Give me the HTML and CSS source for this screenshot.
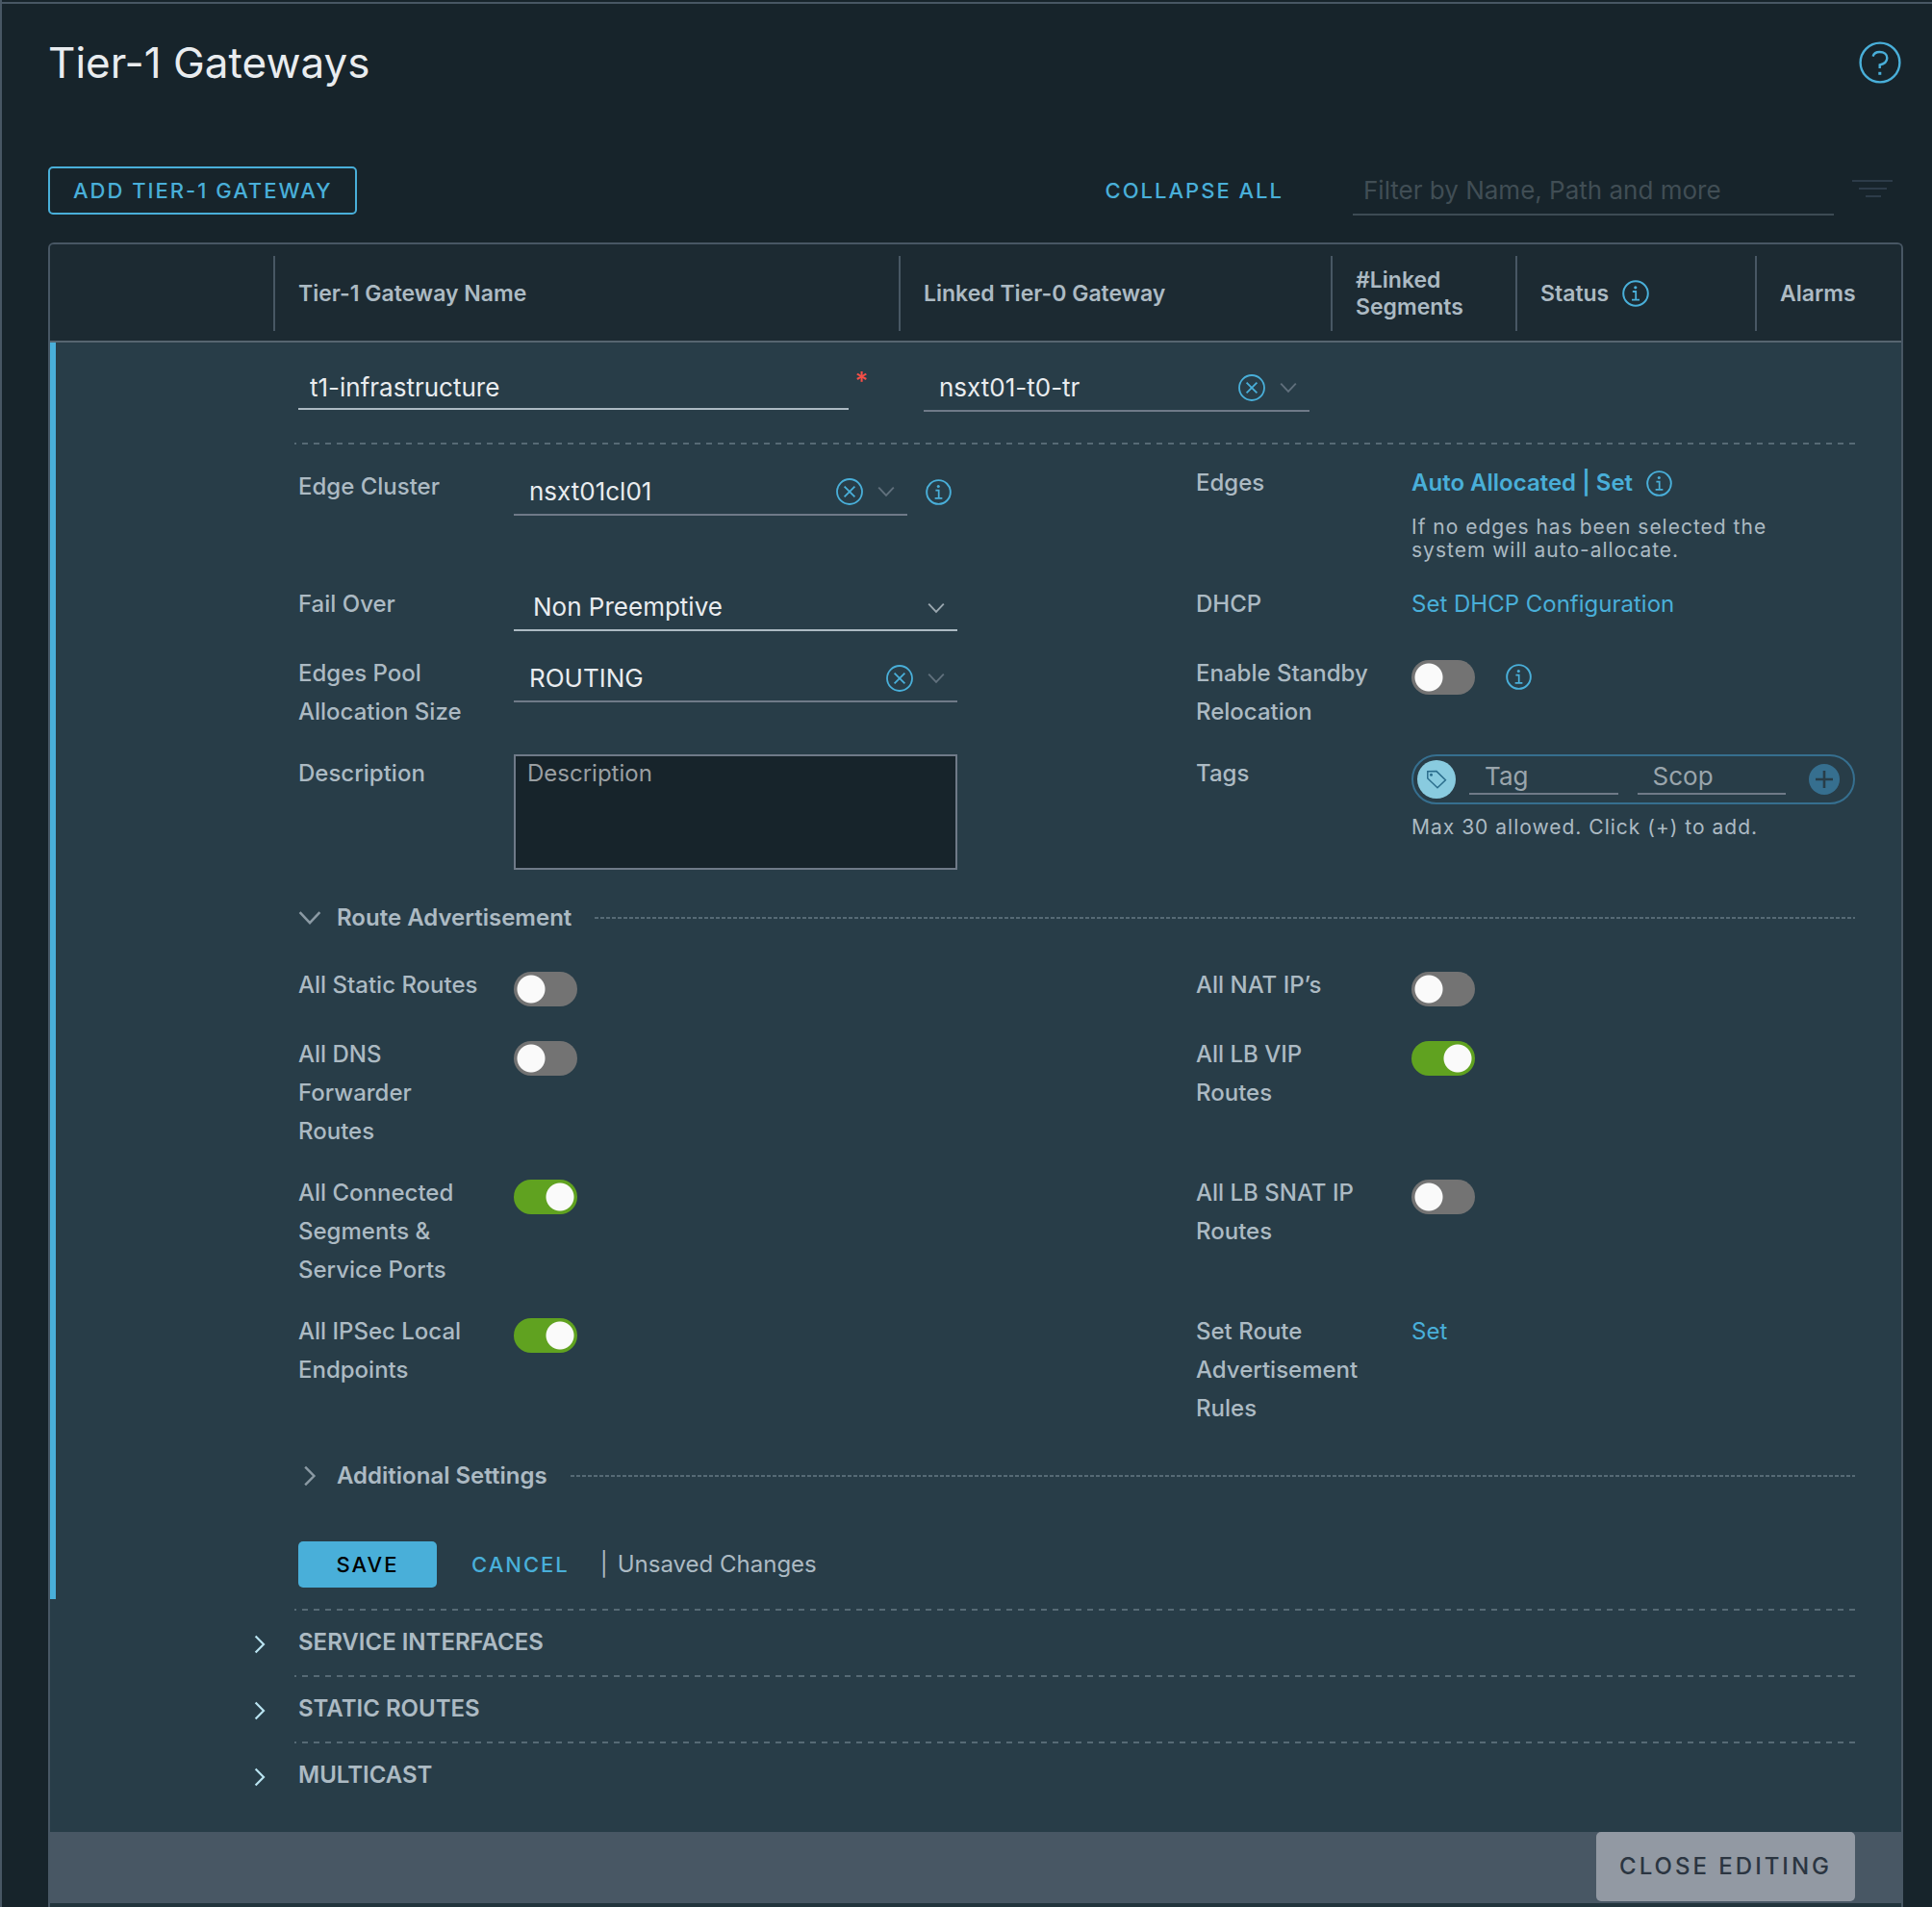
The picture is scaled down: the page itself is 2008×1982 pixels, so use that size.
FILE: index.html
```html
<!DOCTYPE html>
<html lang="en">
<head>
<meta charset="utf-8">
<title>Tier-1 Gateways</title>
<link rel="stylesheet" href="styles.css">
</head>
<body>
<svg class="sprite" aria-hidden="true">
  <symbol id="i-info" viewBox="0 0 28 28">
    <circle cx="14" cy="14" r="12.8" fill="none" stroke="currentColor" stroke-width="2"/>
    <circle cx="13.8" cy="7.8" r="1.6" fill="currentColor"/>
    <path d="M10.8 12h3.4v8.4M10 20.6h8" fill="none" stroke="currentColor" stroke-width="1.8"/>
  </symbol>
  <symbol id="i-clear" viewBox="0 0 28 28">
    <circle cx="14" cy="14" r="13" fill="none" stroke="currentColor" stroke-width="1.8"/>
    <path d="M8.6 8.6l10.8 10.8M19.4 8.6L8.6 19.4" fill="none" stroke="currentColor" stroke-width="1.8"/>
  </symbol>
  <symbol id="i-down" viewBox="0 0 18 12">
    <path d="M1.2 1.6L9 9.8l7.8-8.2" fill="none" stroke="currentColor" stroke-width="1.9"/>
  </symbol>
  <symbol id="i-right" viewBox="0 0 12 20">
    <path d="M1.6 1.4L10 10l-8.4 8.6" fill="none" stroke="currentColor" stroke-width="2.2"/>
  </symbol>
</svg>
<main class="page">
  <header class="page-header">
    <h1>Tier-1 Gateways</h1>
    <button class="icon-button" type="button" aria-label="Help">
      <svg class="help-icon" viewBox="0 0 44 44" fill="none" stroke="currentColor">
        <circle cx="22" cy="22" r="20.4" stroke-width="2.4"/>
        <path d="M14.6 15.6c1-3.200 3.600-4.600 6.900-4.600 4.800 0 7.800 2.400 7.800 6.300 0 4.400-4 6.400-7.600 7.200v3.400" stroke-width="2.400"/>
        <path d="M20.300 31.800h3v3h-3z" fill="currentColor" stroke="none"/>
      </svg>
    </button>
  </header>

  <div class="toolbar">
    <button class="btn btn-outline" type="button">ADD TIER-1 GATEWAY</button>
    <button class="btn btn-link collapse" type="button">COLLAPSE ALL</button>
    <input class="filter" type="text" aria-label="Filter" placeholder="Filter by Name, Path and more">
    <button class="icon-button filter-button" type="button" aria-label="Filter options">
      <svg class="filter-icon" viewBox="0 0 42 20" fill="none" stroke="currentColor" stroke-width="2"><path d="M0 2h42M7 10h29M14 18h16"/></svg>
    </button>
  </div>

  <section class="card">
    <table class="grid">
      <colgroup><col class="c-rail"><col><col class="c-linked"><col class="c-segments"><col class="c-status"><col class="c-alarms"></colgroup>
      <thead>
        <tr>
          <td></td>
          <th scope="col"><div>Tier-1 Gateway Name</div></th>
          <th scope="col"><div>Linked Tier-0 Gateway</div></th>
          <th scope="col"><div>#Linked<br>Segments</div></th>
          <th scope="col"><div>Status <svg class="info"><use href="#i-info"/></svg></div></th>
          <th scope="col"><div>Alarms</div></th>
        </tr>
      </thead>
      <tbody>
        <tr>
          <td class="rail" rowspan="2"></td>
          <td class="name-cell">
            <div class="name-field">
              <input class="text-input" type="text" aria-label="Tier-1 Gateway Name" value="t1-infrastructure" required>
              <span class="required">*</span>
            </div>
          </td>
          <td class="linked-cell">
            <div class="combo">
              <input type="text" aria-label="Linked Tier-0 Gateway" value="nsxt01-t0-tr">
              <button class="icon-button clear" type="button" aria-label="Clear"><svg><use href="#i-clear"/></svg></button>
              <button class="icon-button caret" type="button" aria-label="Open"><svg><use href="#i-down"/></svg></button>
            </div>
          </td>
          <td colspan="3"></td>
        </tr>
        <tr>
          <td class="form-cell" colspan="5">
            <div class="dashed"></div>
            <div class="form">
              <div class="fields">
                <div class="field lowered">
                  <label for="edge-cluster">Edge Cluster</label>
                  <div class="inline">
                    <div class="combo">
                      <input id="edge-cluster" type="text" value="nsxt01cl01">
                      <button class="icon-button clear" type="button" aria-label="Clear"><svg><use href="#i-clear"/></svg></button>
                      <button class="icon-button caret" type="button" aria-label="Open"><svg><use href="#i-down"/></svg></button>
                    </div>
                    <svg class="info cluster-info"><use href="#i-info"/></svg>
                  </div>
                </div>
                <div class="field">
                  <span class="label">Edges</span>
                  <div>
                    <div class="edges-line"><a class="strong" href="#edges">Auto Allocated | Set</a><svg class="info"><use href="#i-info"/></svg></div>
                    <p class="note edges-note">If no edges has been selected the system will auto-allocate.</p>
                  </div>
                </div>

                <div class="field">
                  <label for="fail-over">Fail Over</label>
                  <div class="select">
                    <select id="fail-over"><option>Non Preemptive</option><option>Preemptive</option></select>
                    <svg><use href="#i-down"/></svg>
                  </div>
                </div>
                <div class="field">
                  <span class="label">DHCP</span>
                  <div><a href="#dhcp">Set DHCP Configuration</a></div>
                </div>

                <div class="field">
                  <label for="pool">Edges Pool<br>Allocation Size</label>
                  <div class="combo">
                    <input id="pool" type="text" value="ROUTING">
                    <button class="icon-button clear" type="button" aria-label="Clear"><svg><use href="#i-clear"/></svg></button>
                    <button class="icon-button caret" type="button" aria-label="Open"><svg><use href="#i-down"/></svg></button>
                  </div>
                </div>
                <div class="field">
                  <label for="standby">Enable Standby<br>Relocation</label>
                  <div class="standby"><input class="toggle" id="standby" type="checkbox"><svg class="info"><use href="#i-info"/></svg></div>
                </div>

                <div class="field">
                  <label for="description">Description</label>
                  <textarea id="description" placeholder="Description"></textarea>
                </div>
                <div class="field">
                  <label for="tag">Tags</label>
                  <div>
                    <div class="tags">
                      <span class="tag-badge"><svg viewBox="0 0 22 22" fill="none" stroke="currentColor" stroke-width="1.500"><path d="M1.800 2.800v7.200l10.200 9.700 8.400-8L11 2.600z"/><circle cx="5.500" cy="6.200" r=".8"/></svg></span>
                      <input id="tag" type="text" placeholder="Tag">
                      <input type="text" aria-label="Scope" placeholder="Scop">
                      <button class="icon-button add-tag" type="button" aria-label="Add tag"><svg viewBox="0 0 32 32"><circle cx="16" cy="16" r="16" fill="#366f8f"/><path d="M7 16h18M16 7v18" stroke="#283d48" stroke-width="2.600"/></svg></button>
                    </div>
                    <p class="note tags-note">Max 30 allowed. Click (+) to add.</p>
                  </div>
                </div>
              </div>

              <button class="group" type="button" aria-expanded="true">
                <svg class="group-down"><use href="#i-down"/></svg><span>Route Advertisement</span><i></i>
              </button>

              <div class="fields">
                <div class="field"><label for="t-static">All Static Routes</label><input class="toggle" id="t-static" type="checkbox"></div>
                <div class="field"><label for="t-nat">All NAT IP’s</label><input class="toggle" id="t-nat" type="checkbox"></div>
                <div class="field"><label for="t-dns">All DNS<br>Forwarder<br>Routes</label><input class="toggle" id="t-dns" type="checkbox"></div>
                <div class="field"><label for="t-vip">All LB VIP<br>Routes</label><input class="toggle" id="t-vip" type="checkbox" checked></div>
                <div class="field"><label for="t-seg">All Connected<br>Segments &amp;<br>Service Ports</label><input class="toggle" id="t-seg" type="checkbox" checked></div>
                <div class="field"><label for="t-snat">All LB SNAT IP<br>Routes</label><input class="toggle" id="t-snat" type="checkbox"></div>
                <div class="field"><label for="t-ipsec">All IPSec Local<br>Endpoints</label><input class="toggle" id="t-ipsec" type="checkbox" checked></div>
                <div class="field"><span class="label">Set Route<br>Advertisement<br>Rules</span><div><a href="#rules">Set</a></div></div>
              </div>

              <button class="group" type="button" aria-expanded="false">
                <svg class="group-right"><use href="#i-right"/></svg><span>Additional Settings</span><i></i>
              </button>

              <div class="actions">
                <button class="btn btn-primary" type="button">SAVE</button>
                <button class="btn btn-link" type="button">CANCEL</button>
                <span class="unsaved"><span>|</span><span>Unsaved Changes</span></span>
              </div>
            </div>
          </td>
        </tr>
      </tbody>
    </table>

    <div class="sections">
      <button class="section" type="button"><svg><use href="#i-right"/></svg><span>SERVICE INTERFACES</span></button>
      <button class="section" type="button"><svg><use href="#i-right"/></svg><span>STATIC ROUTES</span></button>
      <button class="section" type="button"><svg><use href="#i-right"/></svg><span>MULTICAST</span></button>
    </div>

    <footer class="card-footer">
      <button class="btn close-editing" type="button">CLOSE EDITING</button>
    </footer>
  </section>
</main>
</body>
</html>
```
FILE: styles.css
```css
:root {
  --bg: #17242b;
  --panel: #283d48;
  --line: #485764;
  --dash: #566a75;
  --label: #acbac3;
  --text: #e9ecef;
  --blue: #49afd9;
  --field-line: #6f7a88;
}

* { box-sizing: border-box; }

body {
  margin: 0;
  background: var(--bg);
  color: var(--label);
  font: 24px/40px Inter, "Liberation Sans", sans-serif;
}

button, input, select, textarea { font: inherit; color: inherit; }
button { cursor: pointer; }
a { color: var(--blue); text-decoration: none; }
p { margin: 0; }
.sprite { position: absolute; width: 0; height: 0; }

.page {
  display: flex;
  flex-direction: column;
  min-height: 100vh;
  padding: 38px 30px 0 48px;
  border-left: 2px solid var(--line);
  background: linear-gradient(var(--line), var(--line)) 0 2px / 100% 2px no-repeat;
}

.icon-button {
  display: flex;
  flex: none;
  padding: 0;
  border: 0;
  background: none;
  color: var(--blue);
}

.page-header {
  display: flex;
  align-items: center;
  justify-content: space-between;
  height: 54px;
  padding-right: 2px;
}
h1 { margin: 0; color: var(--text); font-size: 44px; font-weight: 400; }
.help-icon { width: 44px; height: 44px; }

.toolbar {
  display: flex;
  align-items: center;
  margin: 80px 0 28px;
}
.btn {
  padding: 0;
  border: 0;
  border-radius: 5px;
  background: none;
  font-size: 22px;
  font-weight: 500;
  letter-spacing: 2px;
  white-space: nowrap;
}
.btn-outline {
  height: 50px;
  padding: 0 24px;
  border: 2px solid var(--blue);
  color: var(--blue);
}
.btn-link { color: var(--blue); }
.collapse { margin-left: auto; }
.filter {
  width: 500px;
  height: 52px;
  margin-left: 72px;
  padding: 0 11px;
  border: 0;
  border-bottom: 2px solid #3d4b54;
  background: none;
  font-size: 26px;
}
.filter::placeholder { color: #414e55; opacity: 1; }
.filter-button { margin: 0 11px 4px 19px; color: #2d3c49; }
.filter-icon { width: 42px; height: 20px; }

.card {
  flex: 1;
  overflow: hidden;
  border: 2px solid var(--line);
  border-bottom: 0;
  border-radius: 6px 6px 0 0;
  background: #22343c;
}

.grid {
  width: 100%;
  border-spacing: 0;
  table-layout: fixed;
  background: var(--panel);
}
.grid td, .grid th { padding: 0; vertical-align: top; text-align: left; }
.c-rail { width: 232px; }
.c-linked { width: 449px; }
.c-segments { width: 192px; }
.c-status { width: 249px; }
.c-alarms { width: 152px; }

.grid thead td, .grid thead th {
  height: 102px;
  padding: 12px 0 10px;
  border-bottom: 2px solid #566570;
  background: #1c2a32;
}
.grid th div {
  display: flex;
  align-items: center;
  gap: 14px;
  height: 78px;
  padding-left: 24px;
  border-left: 2px solid var(--line);
  font-size: 23px;
  line-height: 28px;
  font-weight: 600;
}
.info { flex: none; width: 28px; height: 28px; color: var(--blue); }
.form .info { width: 27px; height: 27px; }

.rail { border-left: 6px solid var(--blue); }
.grid .name-cell { height: 104px; padding: 24px 32px 0 26px; }
.grid .linked-cell { padding: 24px 22px 0 26px; }
.name-field { display: flex; gap: 6px; }
.text-input {
  flex: 1;
  min-width: 0;
  height: 46px;
  padding: 0 12px;
  border: 0;
  border-bottom: 2px solid var(--label);
  background: none;
  color: var(--text);
  font-size: 26px;
}
.required { color: #f54f47; font-size: 26px; font-weight: 500; line-height: 32px; }

.combo {
  display: flex;
  flex: 1;
  align-items: center;
  min-width: 0;
  height: 48px;
  padding: 0 8px 0 16px;
  border-bottom: 2px solid var(--field-line);
}
.combo input {
  flex: 1;
  min-width: 0;
  padding: 0;
  border: 0;
  background: none;
  color: var(--text);
  font-size: 26px;
}
.clear { width: 28px; margin-right: 10px; }
.clear svg { width: 28px; height: 28px; }
.caret { justify-content: center; width: 28px; color: #60707c; }
.caret svg { width: 18px; height: 12px; }

.grid .form-cell { padding: 0 48px 12px 22px; }
.dashed, .section span {
  background: repeating-linear-gradient(90deg, var(--dash) 0 2px, transparent 2px 8px, var(--dash) 8px 12px) 0 0 / 100% 2px no-repeat;
}
.dashed { height: 2px; }
.form { padding: 20px 0 0 4px; }

.fields {
  display: grid;
  grid-template-columns: repeat(2, minmax(0, 1fr));
  gap: 24px 248px;
}
.field {
  display: grid;
  grid-template-columns: 224px minmax(0, 1fr);
  align-items: start;
  min-height: 48px;
}
.field label, .label { font-weight: 500; }
.lowered { padding-top: 4px; }
.field .combo { margin-top: 2px; }
.inline { display: flex; align-items: center; }
.cluster-info { margin: 0 6px 0 19px; }
.edges-line { display: flex; align-items: center; gap: 14px; }
.strong { font-weight: 600; }
.note { font-size: 21px; line-height: 24px; letter-spacing: 1px; }
.edges-note { max-width: 400px; margin-top: 14px; }
.tags-note { margin-top: 12px; }

.select { display: grid; align-items: center; }
.select select {
  grid-area: 1 / 1;
  width: 100%;
  height: 48px;
  padding: 0 20px;
  border: 0;
  border-bottom: 2px solid var(--label);
  appearance: none;
  background: none;
  color: var(--text);
  font-size: 26px;
}
.select svg {
  grid-area: 1 / 1;
  justify-self: end;
  width: 18px;
  height: 12px;
  margin-right: 13px;
  color: #9aa7af;
  pointer-events: none;
}

.toggle {
  width: 66px;
  height: 36px;
  margin: 6px 0 0;
  border-radius: 18px;
  appearance: none;
  background: radial-gradient(circle at 18px 18px, #fafafa 14px, transparent 15px) #737373;
}
.toggle:checked {
  background: radial-gradient(circle at 48px 18px, #fafafa 14px, transparent 15px) #60a220;
}
.standby { display: flex; gap: 32px; }
.standby .info { margin-top: 10px; }

textarea {
  display: block;
  width: 100%;
  height: 120px;
  padding: 0 12px;
  border: 2px solid var(--field-line);
  background: var(--bg);
  resize: none;
  line-height: 36px;
}
textarea::placeholder { color: #9a9fa2; opacity: 1; }

.tags {
  display: flex;
  align-items: center;
  height: 52px;
  padding: 0 14px 0 4px;
  border: 2px solid #366f8f;
  border-radius: 26px;
}
.tag-badge {
  display: flex;
  flex: none;
  align-items: center;
  justify-content: center;
  width: 40px;
  height: 40px;
  border-radius: 50%;
  background: #89cbdf;
  color: #2b6d8c;
}
.tag-badge svg { width: 22px; height: 22px; }
.tags input {
  flex: 1;
  min-width: 0;
  height: 36px;
  margin: 0 6px 4px 14px;
  padding: 0 16px;
  border: 0;
  border-bottom: 2px solid var(--field-line);
  background: none;
  font-size: 26px;
}
.tags input::placeholder { color: #9aa5ac; opacity: 1; }
.add-tag { width: 32px; margin-left: 18px; }

.group {
  display: flex;
  align-items: center;
  width: 100%;
  height: 40px;
  margin: 30px 0;
  padding: 0;
  border: 0;
  background: none;
  font-weight: 600;
}
.group svg { flex: none; color: #8b9aa4; }
.group-down { width: 24px; height: 16px; margin-right: 16px; }
.group-right { width: 14px; height: 22px; margin: 0 21px 0 5px; }
.group i {
  flex: 1;
  height: 2px;
  margin-left: 24px;
  background: repeating-linear-gradient(90deg, var(--dash) 0 4px, transparent 4px 6px);
}

.actions { display: flex; align-items: center; margin-top: 48px; }
.btn-primary {
  width: 144px;
  height: 48px;
  margin-right: 36px;
  background: var(--blue);
  color: #000;
}
.unsaved { display: flex; gap: 10px; margin-left: 32px; }

.sections { padding: 10px 48px 25px 206px; background: var(--panel); }
.section {
  display: flex;
  align-items: center;
  width: 100%;
  padding: 0;
  border: 0;
  background: none;
  font-weight: 600;
  text-align: left;
}
.section svg { flex: none; width: 12px; height: 20px; margin: 4px 30px 0 6px; color: #b9e3f0; }
.section span { flex: 1; height: 69px; padding-left: 4px; line-height: 70px; }

.card-footer {
  display: flex;
  justify-content: flex-end;
  height: 74px;
  padding: 0 48px 2px 0;
  background: var(--line);
}
.close-editing {
  height: 72px;
  padding: 0 24px;
  background: #9299a3;
  color: #2b3541;
  font-size: 24px;
  letter-spacing: 3px;
}
```
